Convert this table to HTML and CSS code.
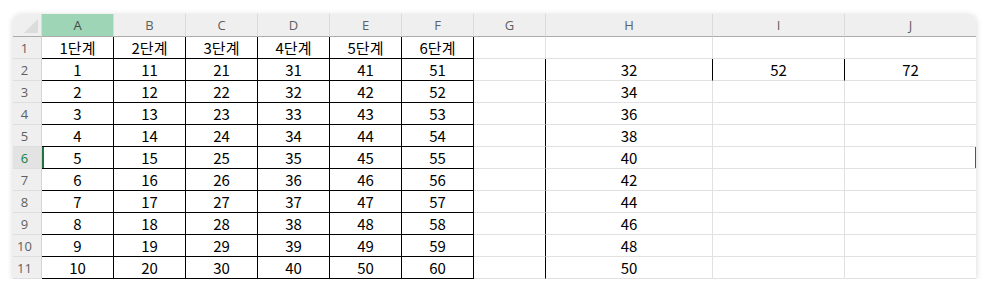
FILE: index.html
```html
<!DOCTYPE html>
<html lang="ko">
<head>
<meta charset="utf-8">
<link rel="stylesheet" href="styles.css">
</head>
<body>
<div class="sheet">
  <div class="corner"><span class="tri"></span></div>
  <div class="ch sel">A</div><div class="ch">B</div><div class="ch">C</div><div class="ch">D</div><div class="ch">E</div><div class="ch">F</div><div class="ch">G</div><div class="ch">H</div><div class="ch">I</div><div class="ch last">J</div>

  <div class="rh">1</div><div class="c b">1단계</div><div class="c b">2단계</div><div class="c b">3단계</div><div class="c b">4단계</div><div class="c b">5단계</div><div class="c b">6단계</div><div class="c"></div><div class="c"></div><div class="c"></div><div class="c last"></div>

  <div class="rh">2</div><div class="c b">1</div><div class="c b">11</div><div class="c b">21</div><div class="c b">31</div><div class="c b">41</div><div class="c b">51</div><div class="c br"></div><div class="c br">32</div><div class="c br">52</div><div class="c last">72</div>

  <div class="rh">3</div><div class="c b">2</div><div class="c b">12</div><div class="c b">22</div><div class="c b">32</div><div class="c b">42</div><div class="c b">52</div><div class="c br"></div><div class="c">34</div><div class="c"></div><div class="c last"></div>

  <div class="rh">4</div><div class="c b">3</div><div class="c b">13</div><div class="c b">23</div><div class="c b">33</div><div class="c b">43</div><div class="c b">53</div><div class="c br"></div><div class="c">36</div><div class="c"></div><div class="c last"></div>

  <div class="rh">5</div><div class="c b">4</div><div class="c b">14</div><div class="c b">24</div><div class="c b">34</div><div class="c b">44</div><div class="c b">54</div><div class="c br"></div><div class="c">38</div><div class="c"></div><div class="c last"></div>

  <div class="rh rsel">6</div><div class="c b first-sel">5</div><div class="c b">15</div><div class="c b">25</div><div class="c b">35</div><div class="c b">45</div><div class="c b">55</div><div class="c br"></div><div class="c">40</div><div class="c"></div><div class="c last last-sel"></div>

  <div class="rh">7</div><div class="c b">6</div><div class="c b">16</div><div class="c b">26</div><div class="c b">36</div><div class="c b">46</div><div class="c b">56</div><div class="c br"></div><div class="c">42</div><div class="c"></div><div class="c last"></div>

  <div class="rh">8</div><div class="c b">7</div><div class="c b">17</div><div class="c b">27</div><div class="c b">37</div><div class="c b">47</div><div class="c b">57</div><div class="c br"></div><div class="c">44</div><div class="c"></div><div class="c last"></div>

  <div class="rh">9</div><div class="c b">8</div><div class="c b">18</div><div class="c b">28</div><div class="c b">38</div><div class="c b">48</div><div class="c b">58</div><div class="c br"></div><div class="c">46</div><div class="c"></div><div class="c last"></div>

  <div class="rh">10</div><div class="c b">9</div><div class="c b">19</div><div class="c b">29</div><div class="c b">39</div><div class="c b">49</div><div class="c b">59</div><div class="c br"></div><div class="c">48</div><div class="c"></div><div class="c last"></div>

  <div class="rh">11</div><div class="c b">10</div><div class="c b">20</div><div class="c b">30</div><div class="c b">40</div><div class="c b">50</div><div class="c b">60</div><div class="c br"></div><div class="c">50</div><div class="c"></div><div class="c last"></div>
</div>
</body>
</html>
```
FILE: styles.css
```css
html, body {
  margin: 0;
  padding: 0;
  background: #ffffff;
}
body {
  padding: 14px 0 0 13px;
}
.sheet {
  display: grid;
  grid-template-columns: 29px repeat(7, 72px) 167px 132px 131px;
  grid-template-rows: 23px repeat(11, 22px);
  width: 963px;
  background: #ffffff;
  border-radius: 8px 8px 0 0;
  box-shadow: 0 1px 6px rgba(0, 0, 0, 0.16);
  overflow: hidden;
  font-family: "Noto Sans CJK KR", "Noto Sans", sans-serif;
}
.corner {
  background: #efefef;
  border-bottom: 1px solid #ababab;
  border-right: 1px solid #dadada;
  box-sizing: border-box;
  position: relative;
}
.tri {
  position: absolute;
  right: 3px;
  bottom: 3px;
  width: 0;
  height: 0;
  border-left: 14px solid transparent;
  border-bottom: 14px solid #dcdcdc;
}
.ch {
  background: #efefef;
  border-bottom: 1px solid #ababab;
  border-right: 1px solid #dadada;
  box-sizing: border-box;
  font-family: "Open Sans", "Noto Sans", sans-serif;
  font-size: 13px;
  color: #5f5f5f;
  display: flex;
  align-items: center;
  justify-content: center;
  padding-bottom: 1px;
}
.ch.sel {
  background: #9fd5b7;
  color: #3d4f45;
}
.ch.last, .c.last {
  border-right: none;
}
.rh {
  background: #efefef;
  border-bottom: 1px solid #dedede;
  border-right: 1px solid #d4d4d4;
  box-sizing: border-box;
  font-family: "Open Sans", "Noto Sans", sans-serif;
  font-size: 13px;
  color: #5f5f5f;
  display: flex;
  align-items: center;
  justify-content: center;
  padding-right: 5px;
}
.rh.rsel {
  background: #e3e3e3;
  color: #107c41;
}
.c {
  box-sizing: border-box;
  border-right: 1px solid #e1e1e1;
  border-bottom: 1px solid #e1e1e1;
  font-size: 15px;
  color: #000000;
  display: flex;
  align-items: center;
  justify-content: center;
  line-height: 1;
}
.c.b {
  border-right: 1px solid #000000;
  border-bottom: 1px solid #000000;
}
.c.br {
  border-right: 1px solid #000000;
}
.c.first-sel {
  box-shadow: inset 2px 0 0 #217346;
}
.c.last-sel {
  box-shadow: inset -1px 0 0 #217346;
}
```
